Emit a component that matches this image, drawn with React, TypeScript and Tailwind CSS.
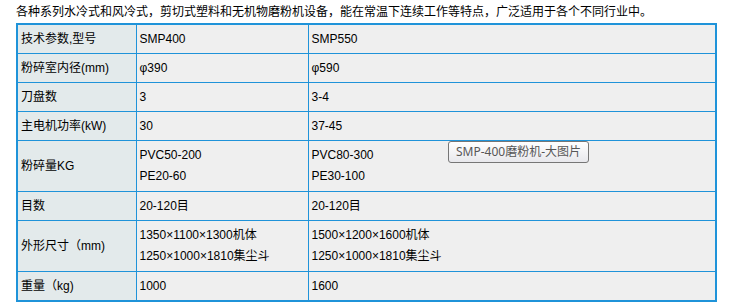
const rows: { label: string; a: string[]; b: string[] }[] = [
  { label: "技术参数,型号", a: ["SMP400"], b: ["SMP550"] },
  { label: "粉碎室内径(mm)", a: ["φ390"], b: ["φ590"] },
  { label: "刀盘数", a: ["3"], b: ["3-4"] },
  { label: "主电机功率(kW)", a: ["30"], b: ["37-45"] },
  { label: "粉碎量KG", a: ["PVC50-200", "PE20-60"], b: ["PVC80-300", "PE30-100"] },
  { label: "目数", a: ["20-120目"], b: ["20-120目"] },
  {
    label: "外形尺寸（mm)",
    a: ["1350×1100×1300机体", "1250×1000×1810集尘斗"],
    b: ["1500×1200×1600机体", "1250×1000×1810集尘斗"],
  },
  { label: "重量（kg)", a: ["1000"], b: ["1600"] },
];

function Cell({ lines }: { lines: string[] }) {
  return (
    <td className="border border-[#1f93d9] bg-[#efefef] px-[3px] align-middle">
      {lines.map((l, i) => (
        <div key={i} className={lines.length > 1 ? "h-[21px] leading-[21px]" : "leading-[28px]"}>
          {l}
        </div>
      ))}
    </td>
  );
}

export default function App() {
  return (
    <div
      className="relative w-[730px] h-[305px] bg-white text-[12px] text-black"
      style={{ fontFamily: '"Liberation Sans", "Noto Sans CJK SC", sans-serif' }}
    >
      <p className="pl-4 pt-[4px] h-[23px] leading-[16px] text-[12px]">
        各种系列水冷式和风冷式，剪切式塑料和无机物磨粉机设备，能在常温下连续工作等特点，广泛适用于各个不同行业中。
      </p>
      <table className="ml-4 w-[701px] border-collapse border-2 border-[#1f93d9]">
        <colgroup>
          <col className="w-[119px]" />
          <col className="w-[172px]" />
          <col />
        </colgroup>
        <tbody>
          {rows.map((r) => (
            <tr key={r.label} className={r.a.length > 1 ? "h-[51px]" : "h-[29px]"}>
              <td className="border border-[#1f93d9] bg-[#e3eaeb] px-[3px] align-middle">{r.label}</td>
              <Cell lines={r.a} />
              <Cell lines={r.b} />
            </tr>
          ))}
        </tbody>
      </table>
      <div
        className="absolute left-[448px] top-[141px] h-[22px] w-[141px] rounded-[3px] border border-[#767676] bg-gradient-to-b from-white to-[#e8e8ec] text-[12px] text-[#575757] leading-[20px] text-center"
        style={{ fontFamily: '"Noto Sans", "Noto Sans CJK SC", sans-serif' }}
      >
        SMP-400磨粉机-大图片
      </div>
    </div>
  );
}
